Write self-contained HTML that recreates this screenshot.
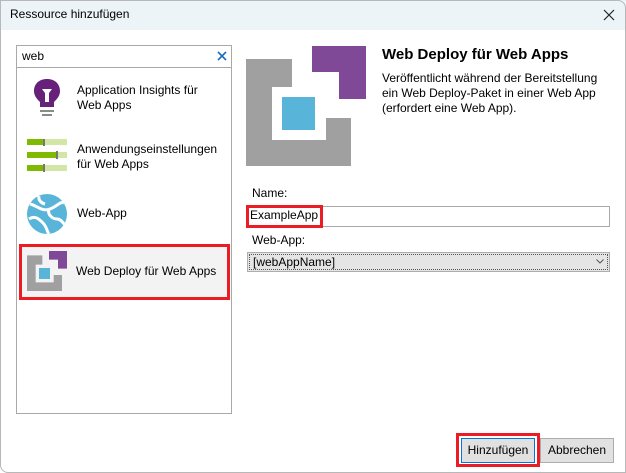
<!DOCTYPE html>
<html><head><meta charset="utf-8"><style>
*{margin:0;padding:0;box-sizing:border-box}
body{width:626px;height:473px;background:#fff;font-family:"Segoe UI","Liberation Sans",sans-serif;font-size:12px;color:#000;position:relative;overflow:hidden}
.title{position:absolute;left:0;top:0;width:626px;height:30px;background:#ecf4f7}
.frame{position:absolute;left:0;top:0;width:626px;height:473px;border:1px solid #b8b8b8;border-radius:0 8px 0 8px;pointer-events:none}
.a{position:absolute;white-space:nowrap}
.box{position:absolute;border:1px solid #a9a9a9;background:#fff}
.red{position:absolute;border:3px solid #ec1c24}
.btn{position:absolute;background:#e1e1e1;border:1px solid #adadad;text-align:center;line-height:23px;font-size:12px}
</style></head><body>
<div class="title"></div>
<div class="a" style="left:10px;top:7px;font-size:12px">Ressource hinzufügen</div>
<svg class="a" style="left:603px;top:9px" width="12" height="12"><path d="M1 1L11 11M11 1L1 11" stroke="#222" stroke-width="1.2"/></svg>

<div class="box" style="left:16px;top:45px;width:216px;height:23px"></div>
<div class="a" style="left:22px;top:49px">web</div>
<svg class="a" style="left:217px;top:51px" width="10" height="10"><path d="M1 1L9 9M9 1L1 9" stroke="#1a6fc4" stroke-width="1.6"/></svg>
<div class="box" style="left:16px;top:67px;width:216px;height:347px"></div>

<svg class="a" style="left:33px;top:78px" width="28" height="42" viewBox="0 0 28 42"><path d="M14 1C6 1 1 6 1 13c0 5 3 8 6 11v5h14v-5c3-3 6-6 6-11C27 6 22 1 14 1z" fill="#68217a"/><path d="M9 11h10l-3 4v9h-4v-9z" fill="#fff"/><rect x="7" y="32" width="14" height="2" fill="#8a8a8a"/><rect x="9" y="36" width="10" height="2" fill="#8a8a8a"/></svg>
<div class="a" style="left:77px;top:83px;line-height:15px">Application Insights für<br>Web Apps</div>

<svg class="a" style="left:27px;top:139px" width="40" height="34"><rect x="0" y="0" width="40" height="6" fill="#d2e6a6"/><rect x="0" y="0" width="16" height="6" fill="#7fba00"/><rect x="16" y="-1" width="2" height="8" fill="#777"/>
<rect x="0" y="13" width="40" height="6" fill="#d2e6a6"/><rect x="0" y="13" width="29" height="6" fill="#7fba00"/><rect x="29" y="12" width="2" height="8" fill="#777"/>
<rect x="0" y="26" width="40" height="6" fill="#d2e6a6"/><rect x="0" y="26" width="16" height="6" fill="#7fba00"/><rect x="16" y="25" width="2" height="8" fill="#777"/></svg>
<div class="a" style="left:77px;top:142px;line-height:15px">Anwendungseinstellungen<br>für Web Apps</div>

<svg class="a" style="left:27px;top:194px" width="40" height="40" viewBox="0 0 40 40"><circle cx="20" cy="20" r="20" fill="#59b4d9"/><path d="M3 10c8 2 12 8 20 5s10-8 14-6M2 25c6-4 10 0 14 4s4 9 6 11M22 15c-2 6 4 10 8 10s6 4 8 6M12 2c-1 4 2 7 6 8" stroke="#fff" stroke-width="3" fill="none"/></svg>
<div class="a" style="left:77px;top:206px">Web-App</div>

<div class="a" style="left:19px;top:244px;width:211px;height:56px;background:#f3f3f3"></div>
<div class="red" style="left:19px;top:244px;width:211px;height:56px"></div>
<svg class="a" style="left:27px;top:251px" width="40" height="40" viewBox="0 0 120 120"><polygon points="0,13 46,13 46,41 26,41 26,94 80,94 80,72 105,72 105,120 0,120" fill="#a0a0a1"/><rect x="36" y="51" width="33" height="33" fill="#59b4d9"/><polygon points="66,0 120,0 120,53 93,53 93,26 66,26" fill="#804998"/></svg>
<div class="a" style="left:76px;top:264px">Web Deploy für Web Apps</div>

<svg class="a" style="left:246px;top:46px" width="120" height="120" viewBox="0 0 120 120"><polygon points="0,13 46,13 46,41 26,41 26,94 80,94 80,72 105,72 105,120 0,120" fill="#a0a0a1"/><rect x="36" y="51" width="33" height="33" fill="#59b4d9"/><polygon points="66,0 120,0 120,53 93,53 93,26 66,26" fill="#804998"/></svg>
<div class="a" style="left:382px;top:46px;font-size:15px;font-weight:bold">Web Deploy für Web Apps</div>
<div class="a" style="left:382px;top:71px;line-height:15px">Veröffentlicht während der Bereitstellung<br>ein Web Deploy-Paket in einer Web App<br>(erfordert eine Web App).</div>

<div class="a" style="left:252px;top:186px">Name:</div>
<div class="box" style="left:246px;top:206px;width:364px;height:21px"></div>
<div class="red" style="left:246px;top:205px;width:77px;height:23px"></div>
<div class="a" style="left:250px;top:208px">ExampleApp</div>
<div class="a" style="left:252px;top:233px">Web-App:</div>
<div class="a" style="left:247px;top:252px;width:363px;height:20px;background:#e5e5e5;border:1px solid #adadad"></div>
<div class="a" style="left:249px;top:254px;width:359px;height:16px;border:1px dotted #555"></div>
<div class="a" style="left:253px;top:255px">[webAppName]</div>
<svg class="a" style="left:596px;top:259px" width="8" height="5"><path d="M0.5 0.5L4 4L7.5 0.5" stroke="#555" fill="none"/></svg>

<div class="red" style="left:456px;top:433px;width:84px;height:34px"></div>
<div class="btn" style="left:461px;top:438px;width:74px;height:25px;border:1px solid #0078d7">Hinzufügen</div>
<div class="btn" style="left:540px;top:438px;width:74px;height:25px">Abbrechen</div>
<div class="frame"></div>
</body></html>
